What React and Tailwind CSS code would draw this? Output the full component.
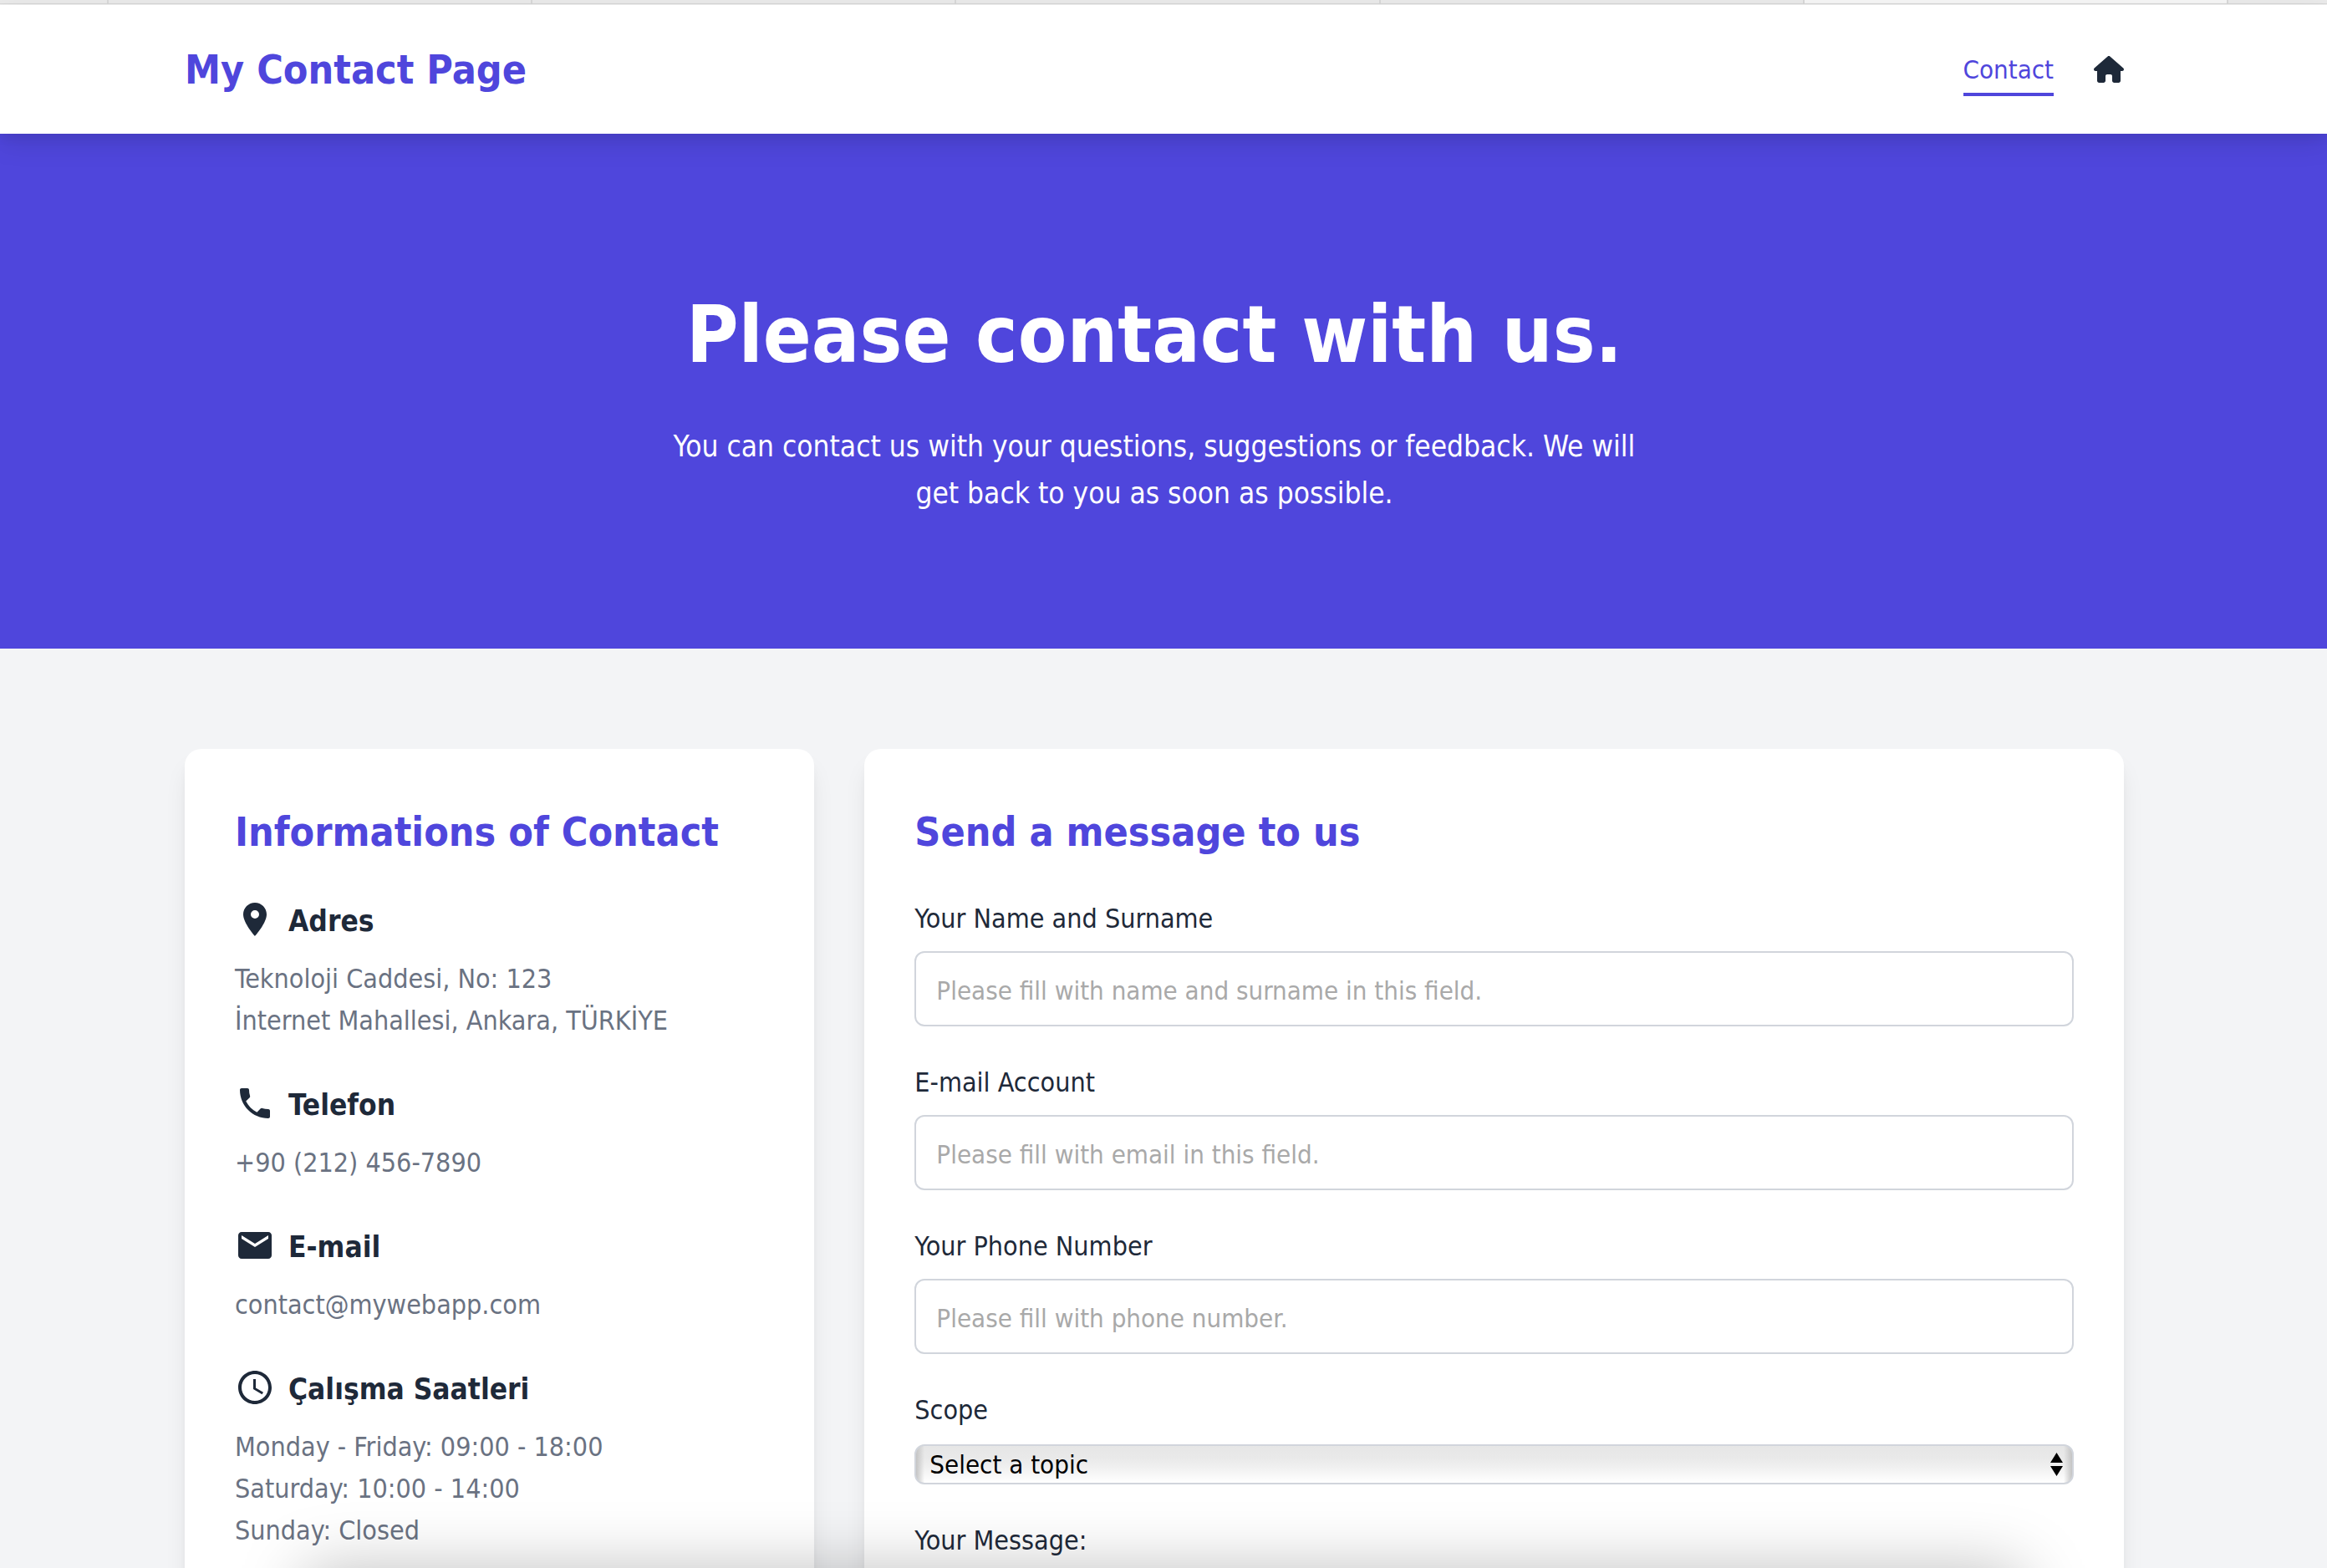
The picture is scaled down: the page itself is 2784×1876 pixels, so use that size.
import { FaHouse } from "react-icons/fa6";
import { MdAccessTime, MdEmail, MdLocationOn, MdPhone } from "react-icons/md";

const contactItems = [
  { icon: MdLocationOn, title: "Adres", lines: ["Teknoloji Caddesi, No: 123", "İnternet Mahallesi, Ankara, TÜRKİYE"] },
  { icon: MdPhone, title: "Telefon", lines: ["+90 (212) 456-7890"] },
  { icon: MdEmail, title: "E-mail", lines: ["contact@mywebapp.com"] },
  {
    icon: MdAccessTime,
    title: "Çalışma Saatleri",
    lines: ["Monday - Friday: 09:00 - 18:00", "Saturday: 10:00 - 14:00", "Sunday: Closed"],
  },
];

const textFields = [
  { id: "name", type: "text", label: "Your Name and Surname", placeholder: "Please fill with name and surname in this field." },
  { id: "email", type: "email", label: "E-mail Account", placeholder: "Please fill with email in this field." },
  { id: "phone", type: "tel", label: "Your Phone Number", placeholder: "Please fill with phone number." },
];

function TabStrip() {
  return (
    <div className="flex h-1.5 border-b border-[#f1f1f1]">
      <div className="flex h-[5px] w-full border-b border-[#d8d8d8] bg-[#eaeaea]">
        <div className="w-32 shrink-0" />
        <div className="flex-1 border-l-2 border-[#d8d8d8]" />
        <div className="flex-1 border-l-2 border-[#d8d8d8]" />
        <div className="flex-1 border-l-2 border-[#d8d8d8]" />
        <div className="flex-1 border-l-2 border-[#d8d8d8]" />
        <div className="flex-1 border-x-2 border-[#d8d8d8] bg-[#f6f6f6]" />
        <div className="w-[118px] shrink-0" />
      </div>
    </div>
  );
}

function Container({ className, children }) {
  return (
    <div className="pr-[22px]">
      <div className={`mx-auto w-full max-w-[2320px] ${className}`}>{children}</div>
    </div>
  );
}

function Card({ title, children }) {
  return (
    <section className="rounded-[20px] bg-white p-[60px] shadow-[0_20px_30px_-6px_rgba(0,0,0,0.1),0_8px_12px_-4px_rgba(0,0,0,0.05)]">
      <h2 className="mb-10 text-[48px] leading-[78px] font-bold text-[#4f46dc]">{title}</h2>
      {children}
    </section>
  );
}

function ContactItem({ icon: Icon, title, lines }) {
  return (
    <div className="mb-12">
      <h3 className="mb-4 flex items-start gap-4 text-[35px] leading-[56px] font-bold text-gray-800">
        <Icon className="mt-0.5 size-12 shrink-0" aria-hidden="true" />
        {title}
      </h3>
      <p className="text-[32px] leading-[50px] text-gray-500">
        {lines.map((line) => (
          <span key={line} className="block">
            {line}
          </span>
        ))}
      </p>
    </div>
  );
}

function Field({ id, label, children }) {
  return (
    <div className="mb-[42px]">
      <label htmlFor={id} className="mb-[14px] block text-[32px] leading-[50px] text-gray-800">
        {label}
      </label>
      {children}
    </div>
  );
}

function TopicSelect() {
  return (
    <div className="relative mt-4">
      <select
        id="scope"
        className="block h-12 w-full appearance-none rounded-xl border-2 border-gray-300 bg-[linear-gradient(90deg,#c4c4c4,transparent_10px,transparent_calc(100%_-_10px),#c4c4c4),linear-gradient(180deg,#e6e6e6,#e9e9e9_30%,#efefef_55%,#ffffff)] px-4 text-[31px] leading-[44px] text-black"
      >
        <option>Select a topic</option>
      </select>
      <svg viewBox="0 0 15 28" className="pointer-events-none absolute top-2.5 right-[13px] h-7 w-[15px]" aria-hidden="true">
        <path d="M7.5 0 15 12H0zM7.5 28 15 16H0z" fill="#000" />
      </svg>
    </div>
  );
}

export default function App() {
  return (
    <div className="relative h-screen overflow-hidden bg-gray-100 font-['DejaVu_Sans_Condensed','Noto_Sans',sans-serif]">
      <TabStrip />

      <header className="relative z-10 bg-white shadow-[0_12px_30px_rgba(0,0,0,0.1),0_6px_12px_rgba(0,0,0,0.05)]">
        <Container className="flex h-[154px] items-center justify-between">
          <a href="#top" className="text-[48px] leading-[78px] font-bold text-[#4f46dc]">
            My Contact Page
          </a>
          <nav className="flex items-center gap-12">
            <a href="#contact" className="border-y-4 border-t-transparent border-b-[#4f46dc] text-[31px] leading-[56px] text-[#4f46dc]">
              Contact
            </a>
            <a href="#home" aria-label="Home" className="text-gray-800">
              <FaHouse className="h-8 w-9" aria-hidden="true" />
            </a>
          </nav>
        </Container>
      </header>

      <section className="bg-[#4f46dc] text-center text-white">
        <Container className="pt-[163px] pb-[158px]">
          <h1 className="mb-[29px] text-[95px] leading-[154px] font-bold">Please contact with us.</h1>
          <p className="mx-auto max-w-[1200px] text-[35px] leading-[56px]">
            You can contact us with your questions, suggestions or feedback. We will get back to you as soon as possible.
          </p>
        </Container>
      </section>

      <main>
        <Container className="grid grid-cols-[1fr_2fr] gap-[60px] py-[120px]">
          <Card title="Informations of Contact">
            {contactItems.map((item) => (
              <ContactItem key={item.title} {...item} />
            ))}
          </Card>

          <Card title="Send a message to us">
            <form>
              {textFields.map(({ id, type, label, placeholder }) => (
                <Field key={id} id={id} label={label}>
                  <input
                    id={id}
                    type={type}
                    placeholder={placeholder}
                    className="block h-[90px] w-full rounded-xl border-2 border-gray-300 bg-white px-6 pt-1 text-[31px] text-gray-800 placeholder:text-[#a9a9a9]"
                  />
                </Field>
              ))}
              <Field id="scope" label="Scope">
                <TopicSelect />
              </Field>
              <Field id="message" label="Your Message:">
                <textarea id="message" rows={5} className="block w-full rounded-xl border-2 border-gray-300 bg-white p-6 text-[31px]" />
              </Field>
            </form>
          </Card>
        </Container>
      </main>

      {/* Soft shade that rises from the bottom edge of the window */}
      <div className="pointer-events-none absolute inset-x-[365px] top-full h-40 w-auto translate-y-1 shadow-[0_0_80px_rgba(0,0,0,0.27)]" />
    </div>
  );
}
